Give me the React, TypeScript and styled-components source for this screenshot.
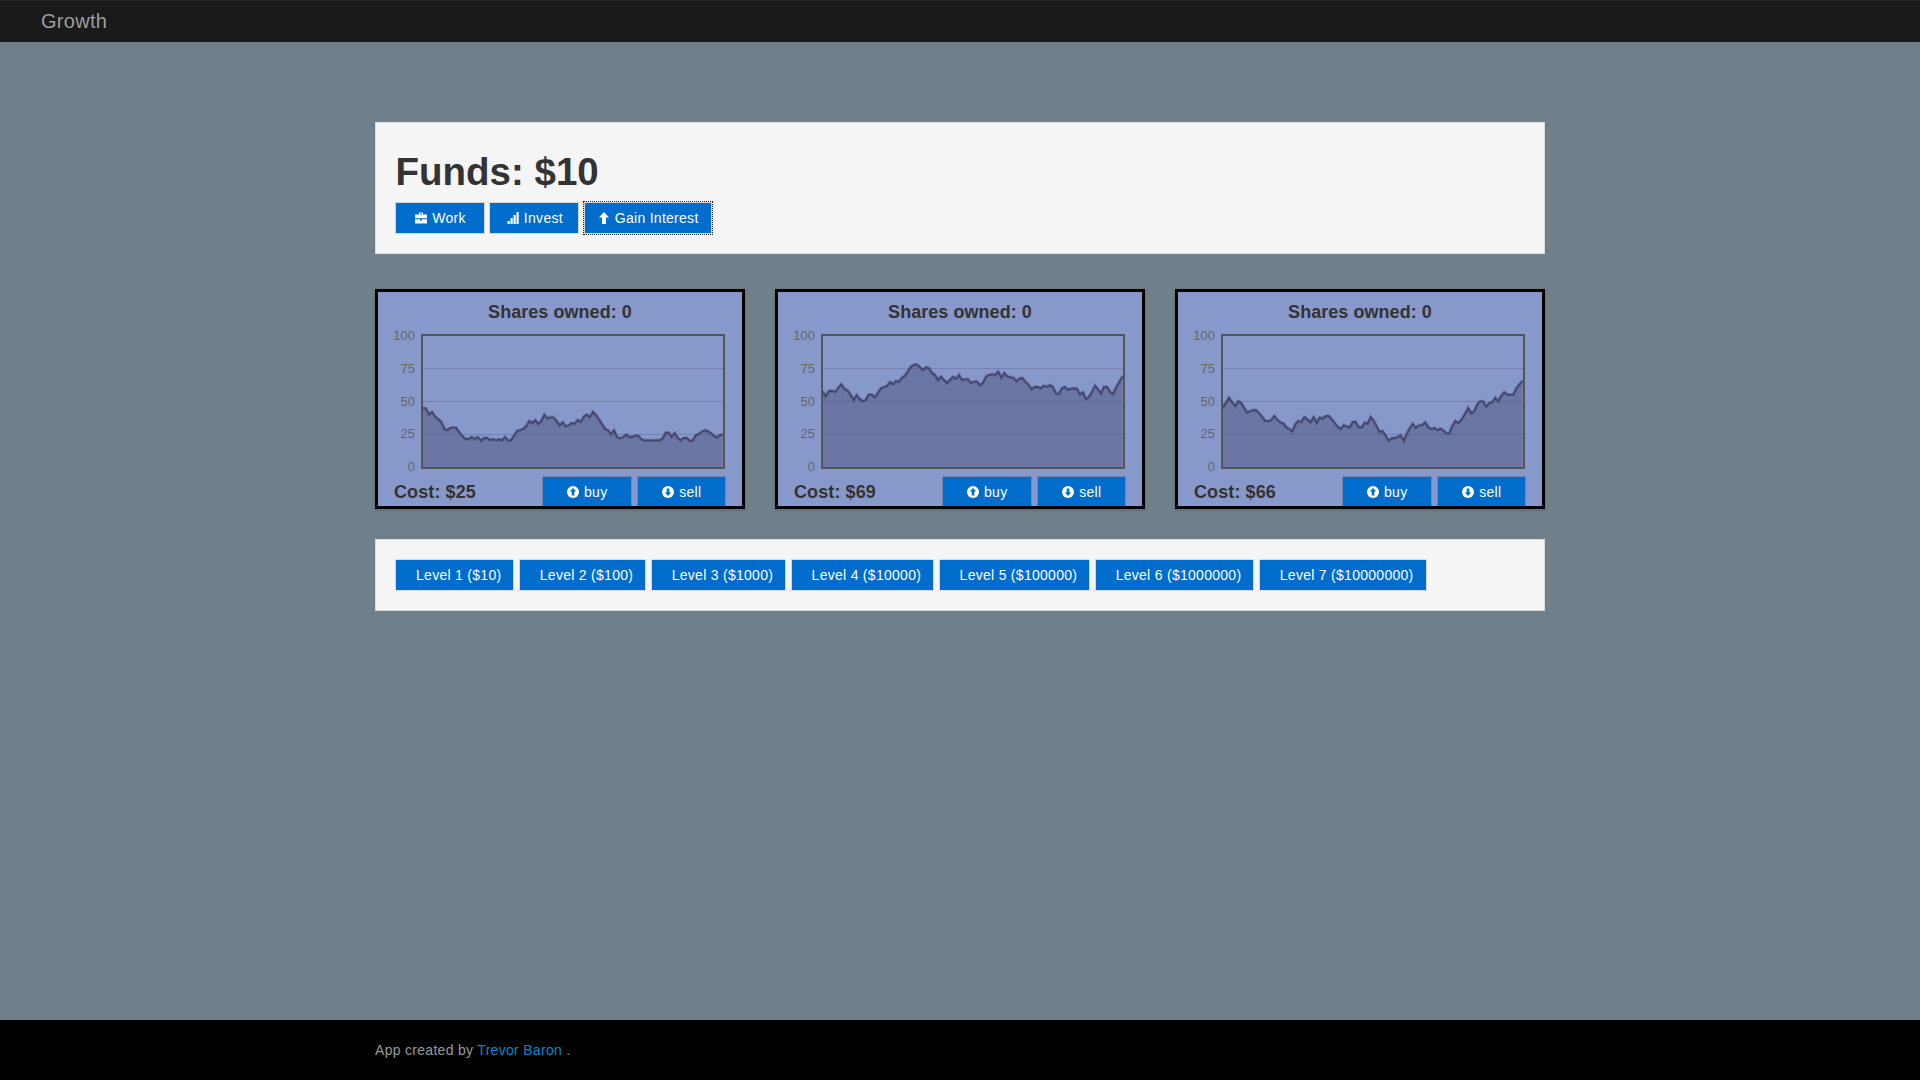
import * as React from 'react';
import styled, { createGlobalStyle } from 'styled-components';

interface IStock {
    cost: number;
    line: string;
}

interface IButtonProps {
    $focused?: boolean;
}

const GlobalStyle = createGlobalStyle`
    html, body {
        margin: 0;
        padding: 0;
    }

    body {
        font-family: "Liberation Sans", Arial, sans-serif;
        font-size: 14px;
        line-height: 20px;
        color: #333;
        background: #6f808a;
    }
`;

const Page = styled.div`
    display: flex;
    flex-direction: column;
    min-height: 100vh;
`;

const Navbar = styled.header`
    box-sizing: border-box;
    height: 42px;
    padding-left: 41px;
    background: #1a1a1a;
    border-top: 1px solid #242424;
    color: #9d9d9d;
    font-size: 20px;
    letter-spacing: .3px;
    line-height: 40px;
`;

const Main = styled.main`
    flex: 1;
    padding-top: 80px;
`;

const Container = styled.div`
    width: 1170px;
    margin: 0 auto;
`;

const Jumbotron = styled.section`
    box-sizing: border-box;
    height: 132px;
    margin-bottom: 35px;
    padding: 27px 19px 0;
    background: #f5f5f5;
    border: 1px solid #ddd;
`;

const Funds = styled.h1`
    margin: 0 0 8px;
    padding-left: .5px;
    font-size: 38.5px;
    line-height: 44px;
    font-weight: bold;
    color: #333;
`;

const ButtonRow = styled.div`
    display: flex;
    gap: 4.4px;
`;

const Button = styled.button<IButtonProps>`
    box-sizing: border-box;
    display: inline-flex;
    align-items: center;
    justify-content: center;
    gap: 4px;
    height: 32px;
    padding: 0 12px;
    background: #006dcc;
    background-clip: padding-box;
    border: 1px solid rgba(0, 0, 0, .12);
    color: #fff;
    font-family: inherit;
    font-size: 14px;
    letter-spacing: .28px;
    line-height: 20px;
    outline: ${props => props.$focused ? '1px dotted #212121' : 'none'};
    outline-offset: 0;
`;

const ActionButton = styled(Button)`
    min-width: 90px;
`;

const TradeButton = styled(Button)`
    flex: none;
    width: 89.5px;
`;

const LevelButton = styled(Button)`
    padding-left: 20px;
`;

const CardGrid = styled.div`
    display: grid;
    grid-template-columns: repeat(3, 370px);
    gap: 30px;
    margin-bottom: 30px;
`;

const Card = styled.article`
    box-sizing: border-box;
    height: 220px;
    overflow: hidden;
    background: #8799cb;
    border: 3px solid #000;
    box-shadow: 0 1px 3px rgba(0, 0, 0, .2);
`;

const CardTitle = styled.h3`
    margin: 0;
    padding: 10px 0 6px;
    font-size: 18px;
    letter-spacing: .05px;
    line-height: 20px;
    font-weight: bold;
    text-align: center;
    color: #333;
`;

const ChartSvg = styled.svg`
    display: block;
    width: 364px;
    height: 148px;
`;

const AxisLabel = styled.text`
    fill: #666;
    font-size: 13px;
    text-anchor: end;
`;

const CardFooter = styled.div`
    display: flex;
    align-items: center;
    gap: 5px;
    height: 32px;
    padding: 0 16px;
`;

const Cost = styled.span`
    flex: 1;
    font-size: 18px;
    letter-spacing: .1px;
    font-weight: bold;
    color: #333;
`;

const LevelPanel = styled.section`
    box-sizing: border-box;
    height: 72px;
    padding: 19px;
    background: #f5f5f5;
    border: 1px solid #ddd;
`;

const Footer = styled.footer`
    box-sizing: border-box;
    height: 60px;
    padding-top: 20px;
    background: #000;
    color: #999;
    letter-spacing: .3px;
`;

const FooterLink = styled.a`
    color: #0088cc;
    text-decoration: none;
`;

const Icon = styled.svg`
    display: block;
    flex: none;
    width: 14px;
    height: 14px;
    fill: #fff;
`;

const Briefcase = () => (
    <Icon viewBox="0 0 14 14">
        <path d="M5 1.500h4v2h4v3.800H1V3.500h4zM6 2.500v1h2v-1zM1 8.300h5v1.200h2V8.300h5v4.200H1z" />
    </Icon>
);

const Signal = () => (
    <Icon viewBox="0 0 14 14">
        <path d="M1.500 10h2.200v3H1.500zM4.500 7h2.200v6H4.500zM7.500 4h2.200v9H7.500zM10.500 1h2.200v12h-2.200z" />
    </Icon>
);

const ArrowUp = () => (
    <Icon viewBox="0 0 14 14">
        <path d="M7 1l5 5.500H9V13H5V6.500H2z" />
    </Icon>
);

const CircleArrow = ({ down }: { down?: boolean }) => (
    <Icon viewBox="0 0 14 14">
        <circle cx="7" cy="7" r="6" />
        <path
            fill="#006dcc"
            d={down ? 'M7 11L3.800 7.500H5.700V3.500H8.300V7.500H10.200z' : 'M7 3L10.200 6.500H8.300V10.500H5.700V6.500H3.800z'}
        />
    </Icon>
);

const stocks: IStock[] = [
    {
        cost: 25,
        line: '158,369 167,370 177,388 186,381 196,395 205,403 214,411 224,433 233,435 242,428 258,428 267,440 277,453 286,462 296,462 305,456 314,462 323,456 333,467 342,459 351,459 361,465 370,463 379,466 388,463 396,466 405,456 414,466 423,466 432,452 441,438 450,435 460,432 469,423 478,408 487,414 496,405 505,417 514,408 523,389 532,400 541,397 550,397 560,408 569,421 578,412 587,424 596,421 605,414 614,416 623,405 632,411 641,395 650,389 659,396 669,381 678,390 687,403 696,417 705,431 714,436 723,447 732,436 741,456 750,460 760,456 769,449 778,456 787,456 796,452 805,452 814,463 823,466 870,466 878,460 887,443 896,443 905,455 914,444 923,459 932,466 941,459 950,459 959,467 968,466 977,451 986,447 995,440 1004,436 1013,438 1022,444 1031,452 1040,458 1049,451 1058,448',
    },
    {
        cost: 69,
        line: '158,319 167,334 177,318 186,318 196,321 205,308 214,298 224,312 233,317 242,330 251,345 260,330 269,342 278,349 287,345 296,329 305,329 314,337 323,325 333,310 342,306 351,303 360,291 369,298 378,288 387,290 396,278 405,272 414,258 423,245 432,239 441,239 450,247 459,255 468,247 477,250 486,264 495,270 504,285 513,275 522,285 531,294 540,285 549,275 558,281 567,270 576,285 585,283 594,283 603,294 612,290 621,290 630,300 639,294 648,275 657,270 666,268 675,270 685,260 694,278 703,264 712,274 721,277 730,278 739,289 748,281 757,279 766,290 775,298 785,313 794,306 803,306 812,310 821,302 830,305 839,301 848,305 858,325 867,326 876,310 885,306 894,314 903,311 912,310 921,311 930,328 939,322 948,342 957,336 966,320 975,302 984,313 993,325 1002,306 1011,306 1020,320 1029,327 1040,304 1058,274',
    },
    {
        cost: 66,
        line: '158,368 167,355 177,338 186,352 196,363 205,349 214,354 223,369 232,383 241,378 250,375 259,376 268,385 277,396 286,408 295,408 304,405 313,393 322,404 331,412 340,415 349,427 358,432 367,439 376,418 385,408 394,411 403,396 412,403 421,412 431,396 440,413 449,397 458,401 467,393 476,393 485,402 494,414 503,425 512,433 521,421 530,424 539,427 548,411 557,411 566,427 575,427 584,413 593,416 602,396 611,407 620,424 629,441 638,439 647,452 656,467 665,460 674,459 683,456 692,451 701,467 710,447 719,430 728,416 737,428 746,421 755,421 766,412 775,427 784,432 793,429 802,435 811,431 820,436 829,445 838,445 847,423 856,408 865,414 874,405 883,390 895,369 904,385 913,378 922,358 931,349 940,349 949,365 958,354 967,352 976,338 985,349 994,332 1003,322 1012,329 1030,329 1040,308 1058,287',
    },
];

const levels = [10, 100, 1000, 10000, 100000, 1000000, 10000000];

// line data was traced at 3x from the card's corner, so scale it back down here
const toChartPoints = (line: string) => line.split(' ').map(pair => {
    const [x, y] = pair.split(',').map(Number);
    return `${(x / 3 - 8).toFixed(1)},${(y / 3 - 43).toFixed(1)}`;
});

const StockChart = ({ line }: { line: string }) => {
    const points = toChartPoints(line);
    const lastX = points[points.length - 1].split(',')[0];
    const firstX = points[0].split(',')[0];
    const area = `${points.join(' ')} ${lastX},139 ${firstX},139`;

    return (
        <ChartSvg viewBox="0 0 364 148">
            <polygon points={area} fill="#3c3c64" fillOpacity=".38" />
            <line x1="44" y1="40.500" x2="346" y2="40.500" stroke="#4b4b6e" strokeOpacity=".28" />
            <line x1="44" y1="73.500" x2="346" y2="73.500" stroke="#4b4b6e" strokeOpacity=".28" />
            <line x1="44" y1="106.500" x2="346" y2="106.500" stroke="#4b4b6e" strokeOpacity=".28" />
            <polyline points={points.join(' ')} fill="none" stroke="#3c3c64" strokeOpacity=".25" strokeWidth="3.500" />
            <polyline points={points.join(' ')} fill="none" stroke="#46466c" strokeWidth="1.800" />
            <rect x="44" y="7" width="302" height="133" fill="none" stroke="#555" strokeWidth="2" />
            <AxisLabel x="37" y="11.500">100</AxisLabel>
            <AxisLabel x="37" y="44.500">75</AxisLabel>
            <AxisLabel x="37" y="77.500">50</AxisLabel>
            <AxisLabel x="37" y="110">25</AxisLabel>
            <AxisLabel x="37" y="143">0</AxisLabel>
        </ChartSvg>
    );
};

const App = () => (
    <Page>
        <GlobalStyle />
        <Navbar>Growth</Navbar>
        <Main>
            <Container>
                <Jumbotron>
                    <Funds>Funds: $10</Funds>
                    <ButtonRow>
                        <ActionButton><Briefcase /> Work</ActionButton>
                        <ActionButton><Signal /> Invest</ActionButton>
                        <ActionButton $focused><ArrowUp /> Gain Interest</ActionButton>
                    </ButtonRow>
                </Jumbotron>
                <CardGrid>
                    {stocks.map(stock => (
                        <Card key={stock.cost}>
                            <CardTitle>Shares owned: 0</CardTitle>
                            <StockChart line={stock.line} />
                            <CardFooter>
                                <Cost>Cost: ${stock.cost}</Cost>
                                <TradeButton><CircleArrow /> buy</TradeButton>
                                <TradeButton><CircleArrow down /> sell</TradeButton>
                            </CardFooter>
                        </Card>
                    ))}
                </CardGrid>
                <LevelPanel>
                    <ButtonRow>
                        {levels.map((price, index) => (
                            <LevelButton key={price}>Level {index + 1} (${price})</LevelButton>
                        ))}
                    </ButtonRow>
                </LevelPanel>
            </Container>
        </Main>
        <Footer>
            <Container>
                App created by <FooterLink href="#">Trevor Baron</FooterLink> .
            </Container>
        </Footer>
    </Page>
);

export default App;
